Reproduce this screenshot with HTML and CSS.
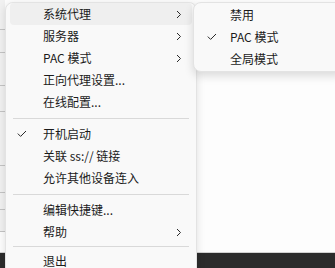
FILE: index.html
```html
<!DOCTYPE html>
<html lang="zh-CN">
<head>
    <meta charset="UTF-8">
    <meta name="viewport" content="width=device-width, initial-scale=1.0">
    <title>托盘菜单</title>
    <link rel="stylesheet" href="styles.css">
</head>
<body>
    <div class="desktop">
        <div class="window">
            <div class="list">
                <div class="row" style="height: 30px"></div>
                <div class="row" style="height: 23px"></div>
                <div class="row" style="height: 33px"></div>
                <div class="row" style="height: 26px"></div>
                <div class="row" style="height: 54px"></div>
                <div class="row" style="height: 27px"></div>
                <div class="row" style="height: 17px"></div>
                <div class="row" style="height: 22px"></div>
            </div>
        </div>
        <div class="taskbar"></div>

        <!-- 主菜单 -->
        <div class="menu main-menu">
            <div class="item active"><span class="mark"></span><span class="label">系统代理</span><span class="arrow"><svg width="6" height="9" viewBox="0 0 6 9"><path d="M1 1 L4.5 4.5 L1 8"/></svg></span></div>
            <div class="item"><span class="mark"></span><span class="label">服务器</span><span class="arrow"><svg width="6" height="9" viewBox="0 0 6 9"><path d="M1 1 L4.5 4.5 L1 8"/></svg></span></div>
            <div class="item"><span class="mark"></span><span class="label">PAC 模式</span><span class="arrow"><svg width="6" height="9" viewBox="0 0 6 9"><path d="M1 1 L4.5 4.5 L1 8"/></svg></span></div>
            <div class="item"><span class="mark"></span><span class="label">正向代理设置...</span></div>
            <div class="item"><span class="mark"></span><span class="label">在线配置...</span></div>
            <div class="separator"></div>
            <div class="item"><span class="mark"><svg width="10" height="8" viewBox="0 0 10 8"><path d="M0.8 3.6 L3.6 6.4 L9 1"/></svg></span><span class="label">开机启动</span></div>
            <div class="item"><span class="mark"></span><span class="label">关联 ss:// 链接</span></div>
            <div class="item"><span class="mark"></span><span class="label">允许其他设备连入</span></div>
            <div class="separator"></div>
            <div class="item"><span class="mark"></span><span class="label">编辑快捷键...</span></div>
            <div class="item"><span class="mark"></span><span class="label">帮助</span><span class="arrow"><svg width="6" height="9" viewBox="0 0 6 9"><path d="M1 1 L4.5 4.5 L1 8"/></svg></span></div>
            <div class="separator short"></div>
            <div class="item"><span class="mark"></span><span class="label">退出</span></div>
        </div>

        <!-- 系统代理子菜单 -->
        <div class="menu sub-menu">
            <div class="item"><span class="mark"></span><span class="label">禁用</span></div>
            <div class="item"><span class="mark"><svg width="10" height="8" viewBox="0 0 10 8"><path d="M0.8 3.6 L3.6 6.4 L9 1"/></svg></span><span class="label">PAC 模式</span></div>
            <div class="item"><span class="mark"></span><span class="label">全局模式</span></div>
        </div>
    </div>
</body>
</html>
```

FILE: styles.css
```css
body {
    margin: 0;
    font-family: "Segoe UI", "Noto Sans CJK SC", "Noto Sans", sans-serif;
    font-size: 12px;
    color: #1b1b1b;
    background-color: #fdfdfd;
    overflow: hidden;
}
.desktop {
    position: relative;
    width: 335px;
    height: 268px;
    display: flex;
    flex-direction: column;
}
.window {
    flex: 1;
    background-color: #fdfdfd;
}
.list {
    width: 5px;
    background-color: #f1f1f1;
}
.row {
    border-bottom: 1px solid #c4c4c4;
    box-sizing: border-box;
}
.taskbar {
    height: 15px;
    background-color: #2c2c2c;
    border-top: 1px solid #d2d2d2;
}
.menu {
    position: absolute;
    box-sizing: border-box;
    background-color: #f9f9f9;
    border: 1px solid #e3e3e3;
    border-radius: 8px;
}
.main-menu {
    left: 5px;
    top: 2px;
    width: 192px;
    height: 290px;
    box-shadow: 0 2px 8px rgba(0, 0, 0, 0.12);
}
.sub-menu {
    left: 193px;
    top: 2px;
    width: 152px;
    height: 70px;
    padding: 1px 0;
    box-shadow: 0 4px 10px rgba(0, 0, 0, 0.14);
}
.item {
    display: flex;
    align-items: center;
    height: 22px;
    margin: 0 4px;
    border-radius: 4px;
    line-height: 22px;
    white-space: nowrap;
}
.item.active {
    background-color: #efefef;
}
.mark {
    width: 33px;
    flex-shrink: 0;
    display: flex;
    align-items: center;
    padding-left: 7px;
    box-sizing: border-box;
}
.sub-menu .mark {
    width: 32px;
    padding-left: 9px;
}
.mark svg path,
.arrow svg path {
    fill: none;
    stroke: #2a2a2a;
    stroke-width: 1;
}
.label {
    flex: 1;
}
.arrow {
    display: flex;
    align-items: center;
    width: 16px;
}
.separator {
    height: 10px;
    margin: 0 7px;
    display: flex;
    align-items: center;
}
.separator.short {
    height: 7px;
    align-items: flex-start;
    padding-top: 3px;
    box-sizing: border-box;
}
.separator::before {
    content: "";
    flex: 1;
    border-top: 1px solid #d9d9d9;
}
```
